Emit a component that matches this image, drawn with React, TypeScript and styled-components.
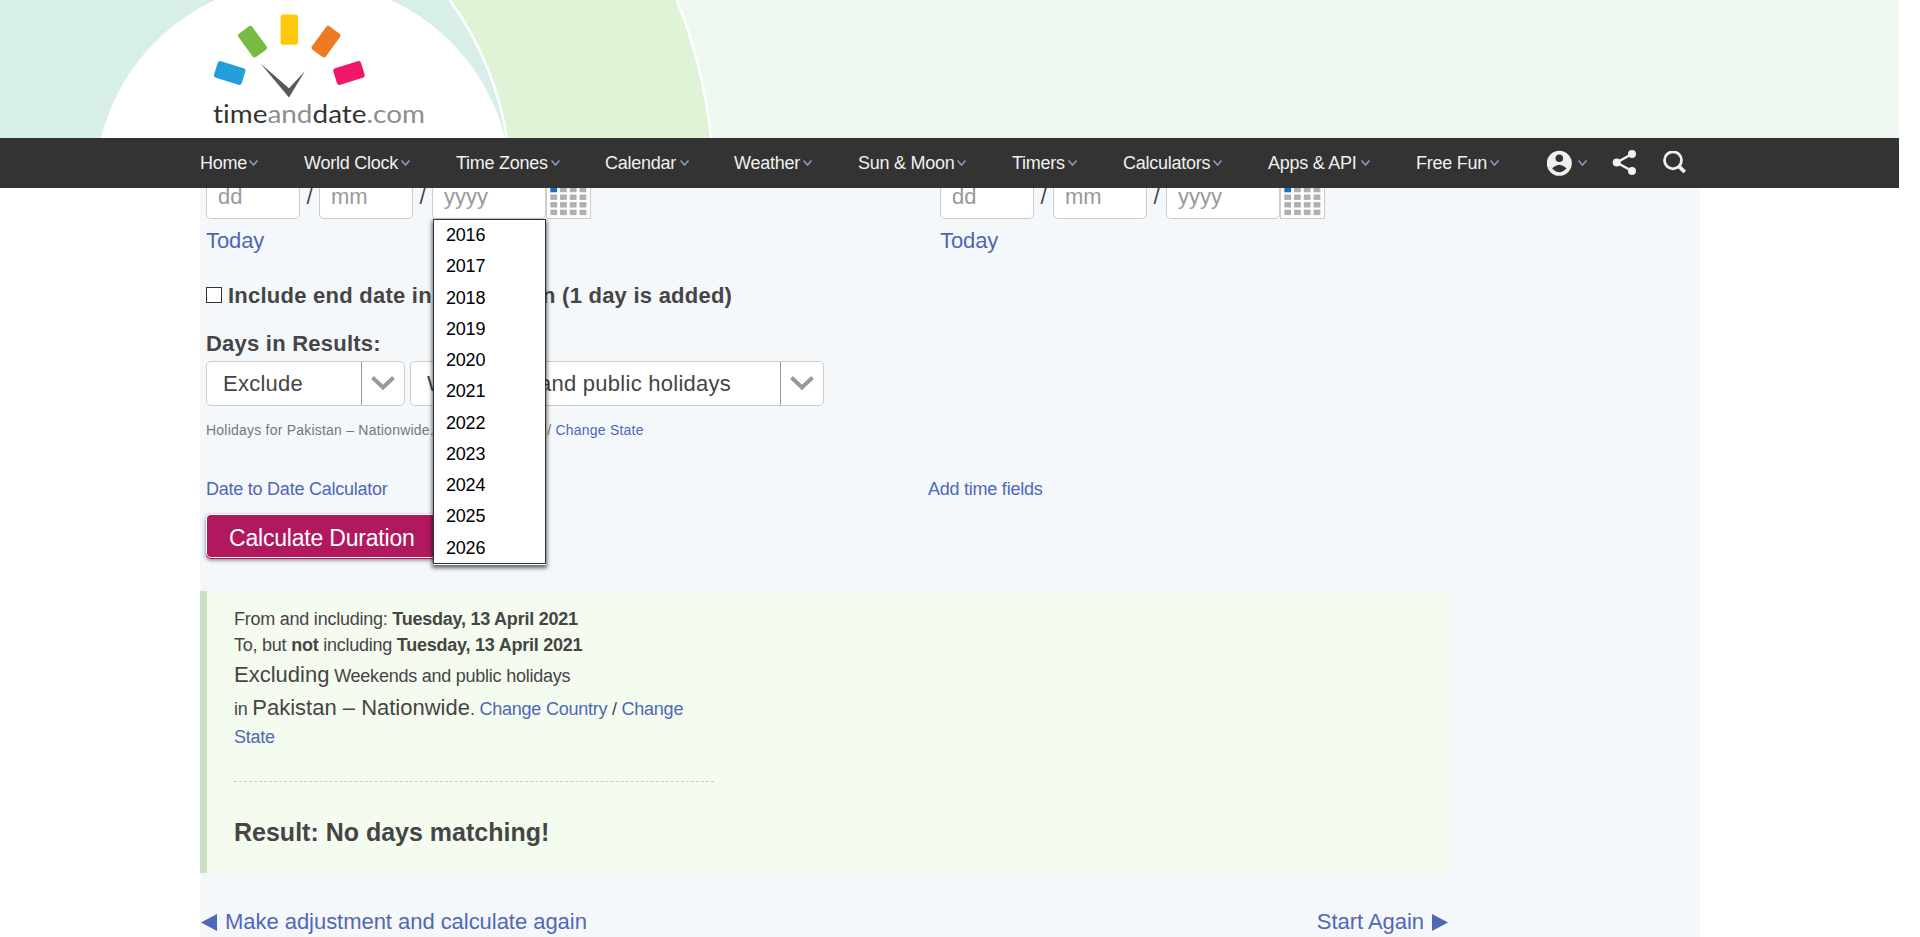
import React from 'react';
import styled, { createGlobalStyle } from 'styled-components';

const Global = createGlobalStyle`
  * { box-sizing: border-box; }
  html, body { margin: 0; padding: 0; background: #fff; overflow: hidden; }
  body { font-family: "Liberation Sans", Arial, sans-serif; color: #454545; }
  a { color: #5067b6; text-decoration: none; }
`;

const Page = styled.div`
  height: 937px;
  overflow: hidden;
  display: flex;
  flex-direction: column;
`;
const Header = styled.header`
  width: 1899px;
  height: 138px;
  flex: none;
  background: #eef8f0;
  svg { display: block; }
`;
const Nav = styled.nav`
  width: 1899px;
  height: 50px;
  flex: none;
  background: #333;
  padding-left: 200px;
  display: flex;
  align-items: center;
  color: #f0f0f0;
  font-size: 18px;
  position: relative;
  z-index: 2;
`;
const NavItem = styled.div<{ $w: number }>`
  width: ${(p) => p.$w}px;
  display: flex;
  align-items: center;
  white-space: nowrap;
`;
const NavText = styled.span<{ $w: number }>`
  width: ${(p) => p.$w}px;
  letter-spacing: -0.25px;
`;
const Main = styled.main`
  width: 1500px;
  margin-left: 200px;
  flex: 1;
  background: #f4f8fb;
  display: flex;
  flex-direction: column;
`;
const Form = styled.section`
  height: 403px;
  flex: none;
  padding-left: 6px;
`;
const DateColumns = styled.div`
  display: flex;
  height: 71px;
`;
const DateColumn = styled.div`
  width: 734px;
`;
const DateRow = styled.div`
  display: flex;
  margin-top: -14px;
`;
const Field = styled.div<{ $w: number }>`
  position: relative;
  width: ${(p) => p.$w}px;
  height: 45px;
  border: 1px solid #ccc;
  border-radius: 5px;
  background: #fff;
  color: #999;
  font-size: 22px;
  line-height: 43px;
  padding-left: 11px;
`;
const Slash = styled.span`
  width: 19px;
  text-align: center;
  font-size: 22px;
  line-height: 45px;
`;
const CalButton = styled.div`
  width: 45px;
  height: 45px;
  border: 1px solid #ccc;
  background: #fff;
`;
const Today = styled.a`
  display: block;
  font-size: 22px;
  line-height: 26px;
  margin-top: 9px;
  letter-spacing: -0.1px;
`;
const YearMenu = styled.ul`
  position: absolute;
  z-index: 3;
  left: 0;
  top: 44px;
  width: 113px;
  height: 345px;
  margin: 0;
  padding: 0 0 0 12px;
  list-style: none;
  background: #fff;
  border: 1px solid #333;
  box-shadow: 0 1px 0 #fff, 0 3px 4px 1px rgba(0, 0, 0, 0.6);
  color: #000;
  font-size: 18px;
  line-height: 31.27px;
  letter-spacing: -0.2px;
`;
const CheckRow = styled.label`
  display: flex;
  align-items: center;
  height: 28px;
  margin-top: 22px;
  font-size: 22px;
  font-weight: bold;
  letter-spacing: 0.24px;
`;
const CheckText = styled.span`
  padding-top: 1px;
`;
const Checkbox = styled.span`
  width: 16px;
  height: 16px;
  border: 1px solid #333;
  background: #fff;
  margin-right: 6px;
`;
const Legend = styled.div`
  height: 28px;
  margin-top: 21px;
  line-height: 28px;
  font-size: 22px;
  font-weight: bold;
  letter-spacing: 0.23px;
`;
const SelectRow = styled.div`
  display: flex;
  gap: 5px;
  margin-top: 3px;
`;
const Select = styled.div<{ $w: number }>`
  width: ${(p) => p.$w}px;
  height: 45px;
  border: 1px solid #ccc;
  border-radius: 5px;
  background: #fff;
  display: flex;
  font-size: 22px;
  line-height: 44px;
  white-space: nowrap;
  letter-spacing: 0.26px;
`;
const SelectText = styled.span`
  flex: 1;
  padding-left: 16px;
`;
const SelectArrow = styled.span`
  width: 43px;
  border-left: 1px solid #999;
  display: flex;
  align-items: center;
  justify-content: center;
`;
const Note = styled.div`
  margin-top: 15px;
  height: 18px;
  font-size: 14px;
  line-height: 18px;
  color: #777;
  letter-spacing: 0.22px;
`;
const Links = styled.div`
  display: flex;
  margin-top: 39px;
  height: 22px;
  font-size: 18px;
  line-height: 22px;
  letter-spacing: -0.24px;
  a:first-child { width: 722px; }
`;
const Button = styled.div`
  width: 233px;
  height: 44px;
  margin-top: 14px;
  border: 1px solid #fff;
  border-radius: 5px;
  background: #b2185e;
  box-shadow: 0 1px 0 #b2185e, 0 2px 4px rgba(0, 0, 0, 0.5);
  color: #fff;
  font-size: 23px;
  line-height: 46px;
  padding-left: 22px;
  letter-spacing: -0.2px;
`;
const Result = styled.section`
  width: 1250px;
  height: 282px;
  flex: none;
  background: #f4fcf0;
  border-left: 7px solid #cbe0c3;
  padding: 15px 0 0 27px;
`;
const Line = styled.div<{ $h: number }>`
  height: ${(p) => p.$h}px;
  line-height: ${(p) => p.$h}px;
  font-size: 18px;
  letter-spacing: -0.24px;
  white-space: nowrap;
`;
const Large = styled.span`
  font-size: 22px;
  letter-spacing: 0;
`;
const Divider = styled.div`
  width: 480px;
  border-top: 1px dashed #c8cfc5;
  margin: 31px 0 0;
`;
const Outcome = styled.h2`
  margin: 34px 0 0;
  font-size: 25px;
  line-height: 32px;
`;
const Footer = styled.div`
  width: 1250px;
  display: flex;
  justify-content: space-between;
  margin-top: 35px;
  font-size: 22px;
  line-height: 28px;
  letter-spacing: -0.04px;
  a { display: flex; align-items: center; gap: 8px; padding: 0 2px 0 1px; }
`;

const Chevron = () => (
  <svg width="11" height="8" viewBox="0 0 11 8">
    <path d="M1.500 1.500 5.500 6 9.500 1.500" fill="none" stroke="#8398bd" strokeWidth="1.700" />
  </svg>
);
const BigChevron = () => (
  <svg width="24" height="18" viewBox="0 0 24 18">
    <path d="M1.500 2.500 12 12.500 22.500 2.500" fill="none" stroke="#999" strokeWidth="4" />
  </svg>
);
const CalGrid = () => (
  <svg width="43" height="43" viewBox="0 0 43 43">
    {[0, 1, 2, 3, 4].map((r) =>
      [0, 1, 2, 3].map((c) => (
        <rect key={`${r}-${c}`} x={3.3 + c * 9.75} y={4.3 + r * 7.6} width="6.800" height="5.400"
          fill={r === 1 && c === 0 ? '#1a6fb9' : '#b3afae'} />
      )),
    )}
  </svg>
);

const Mark = ({ x, y, angle, fill }: { x: number; y: number; angle: number; fill: string }) => (
  <rect x="-8.600" y="-14.500" width="17.200" height="29" rx="2.800" fill={fill}
    transform={`translate(${x} ${y}) rotate(${angle})`} />
);

const Banner = () => (
  <svg width="1899" height="138" viewBox="0 0 1899 138">
    <circle cx="208" cy="189" r="505.500" fill="#dff3d7" stroke="#fff" strokeWidth="2.500" />
    <circle cx="189" cy="189" r="322" fill="#d8efe9" stroke="#fff" strokeWidth="2.500" />
    <circle cx="303" cy="189" r="208.500" fill="#fff" />
    <Mark x={229.700} y={73} angle={-72.5} fill="#229edb" />
    <Mark x={252.500} y={41.700} angle={-36} fill="#77bb43" />
    <rect x="280.600" y="14.400" width="17.400" height="30.400" rx="2.500" fill="#ffc80a" />
    <Mark x={326} y={41.700} angle={36} fill="#ee7a24" />
    <Mark x={349} y={73} angle={72.5} fill="#f01768" />
    <path d="M260.500 63.500 L289 88.300 L305 71 L289 97.500Z" fill="#58595b" />
    <text x="213" y="123" fontFamily="Lato, sans-serif" fontSize="25.500" textLength="212"
      lengthAdjust="spacingAndGlyphs" fill="#333" style={{ fontVariantLigatures: 'none' }}>
      time<tspan fill="#8d8e90">and</tspan>date<tspan fill="#8d8e90">.com</tspan>
    </text>
  </svg>
);

const items: [string, number, number][] = [
  ['Home', 104, 48], ['World Clock', 152, 96], ['Time Zones', 149, 94],
  ['Calendar', 129, 74], ['Weather', 124, 68], ['Sun & Moon', 154, 98],
  ['Timers', 111, 55], ['Calculators', 145, 89], ['Apps & API', 148, 92], ['Free Fun', 131, 73],
];
const years = [2016, 2017, 2018, 2019, 2020, 2021, 2022, 2023, 2024, 2025, 2026];

const DateEntry = ({ open = false }: { open?: boolean }) => (
  <DateColumn>
    <DateRow>
      <Field $w={94}>dd</Field><Slash>/</Slash>
      <Field $w={94}>mm</Field><Slash>/</Slash>
      <Field $w={114}>yyyy{open && <YearMenu>{years.map((y) => <li key={y}>{y}</li>)}</YearMenu>}</Field>
      <CalButton><CalGrid /></CalButton>
    </DateRow>
    <Today>Today</Today>
  </DateColumn>
);

export default function App() {
  return (
    <Page>
      <Global />
      <Header><Banner /></Header>
      <Nav>
        {items.map(([label, w, t]) => (
          <NavItem key={label} $w={w}><NavText $w={t}>{label}</NavText><Chevron /></NavItem>
        ))}
        <NavItem $w={65}>
          <svg width="25" height="26" viewBox="0 0 25 26">
            <circle cx="12.300" cy="13.300" r="12.500" fill="#f0f0f0" />
            <circle cx="12.300" cy="8.300" r="3.800" fill="#333" />
            <path d="M5 18.300 Q12.300 11 19.600 18.300 Q12.300 26.300 5 18.300Z" fill="#333" />
          </svg>
          <NavText $w={5} /><Chevron />
        </NavItem>
        <NavItem $w={50}>
          <svg width="25" height="26" viewBox="0 0 25 26">
            <path d="M20 4 4.700 12.500 20 21" fill="none" stroke="#f0f0f0" strokeWidth="2.500" />
            <circle cx="20" cy="4" r="4" fill="#f0f0f0" />
            <circle cx="4.700" cy="12.500" r="4" fill="#f0f0f0" />
            <circle cx="20" cy="21" r="4" fill="#f0f0f0" />
          </svg>
        </NavItem>
        <svg width="25" height="24" viewBox="0 0 25 24">
          <circle cx="11" cy="9.300" r="8.500" fill="none" stroke="#f0f0f0" strokeWidth="2.800" />
          <path d="M16.500 14.800 22.700 21" stroke="#f0f0f0" strokeWidth="3.800" />
        </svg>
      </Nav>
      <Main>
        <Form>
          <DateColumns><DateEntry open /><DateEntry /></DateColumns>
          <CheckRow><Checkbox /><CheckText>Include end date in calculation (1 day is added)</CheckText></CheckRow>
          <Legend>Days in Results:</Legend>
          <SelectRow>
            <Select $w={199}><SelectText>Exclude</SelectText><SelectArrow><BigChevron /></SelectArrow></Select>
            <Select $w={414}><SelectText>Weekends and public holidays</SelectText><SelectArrow><BigChevron /></SelectArrow></Select>
          </SelectRow>
          <Note>Holidays for Pakistan – Nationwide. <a>Change Country</a> / <a>Change State</a></Note>
          <Links><a>Date to Date Calculator</a><a>Add time fields</a></Links>
          <Button>Calculate Duration</Button>
        </Form>
        <Result>
          <Line $h={26}>From and including: <b>Tuesday, 13 April 2021</b></Line>
          <Line $h={26}>To, but <b>not</b> including <b>Tuesday, 13 April 2021</b></Line>
          <Line $h={33}><Large>Excluding</Large> Weekends and public holidays</Line>
          <Line $h={33}>in <Large>Pakistan – Nationwide</Large>. <a>Change Country</a> / <a>Change</a></Line>
          <Line $h={26}><a>State</a></Line>
          <Divider />
          <Outcome>Result: No days matching!</Outcome>
        </Result>
        <Footer>
          <a><svg width="16" height="17"><path d="M0 8.500 16 0V17Z" fill="#5067b6" /></svg>Make adjustment and calculate again</a>
          <a>Start Again<svg width="16" height="17"><path d="M16 8.500 0 0V17Z" fill="#5067b6" /></svg></a>
        </Footer>
      </Main>
    </Page>
  );
}
